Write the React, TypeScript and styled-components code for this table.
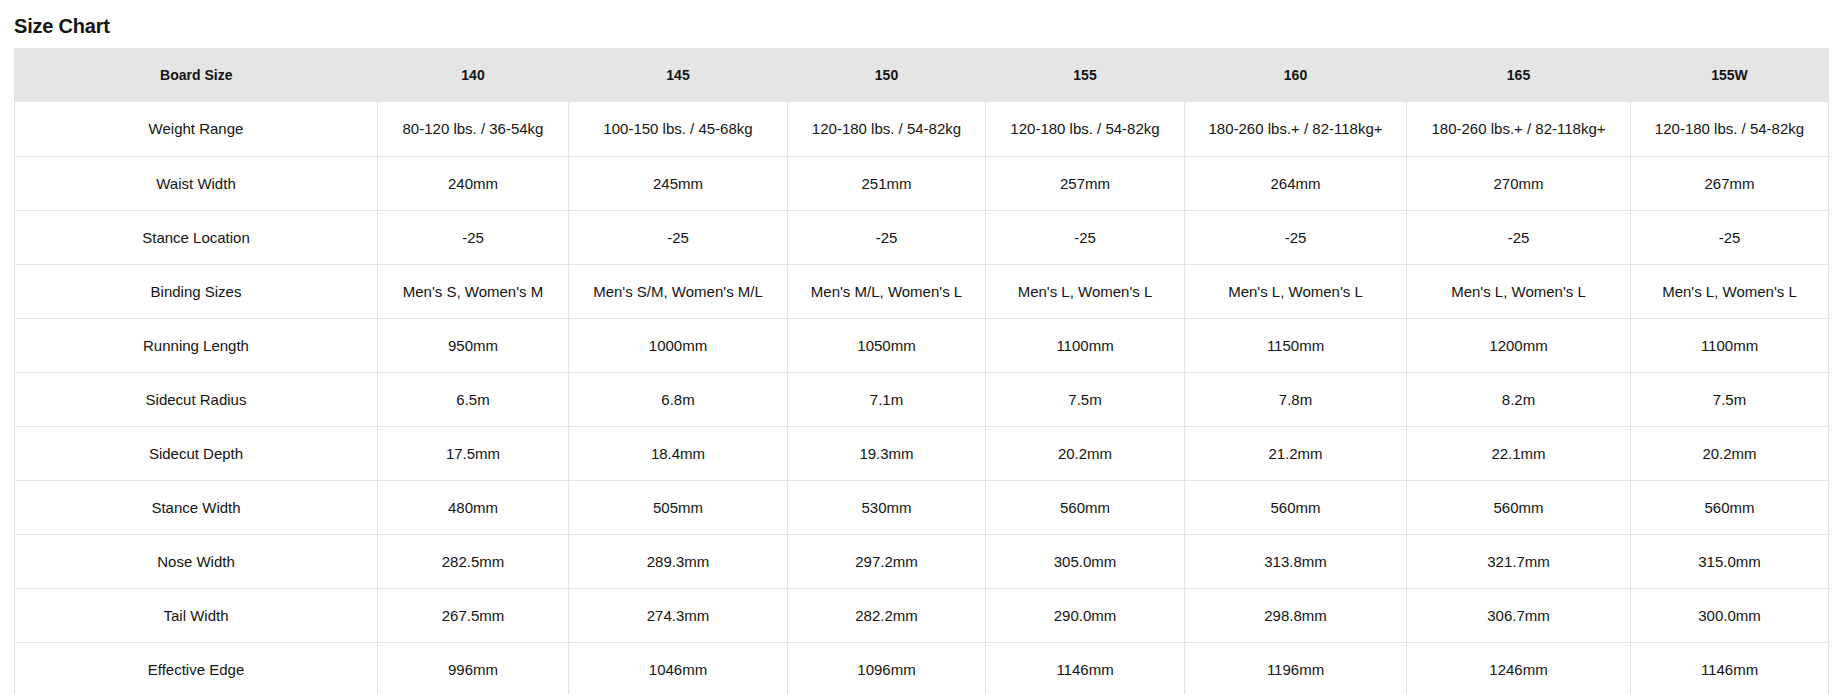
import React from "react";
import styled, { createGlobalStyle } from "styled-components";

const GlobalStyle = createGlobalStyle`
  html, body { margin: 0; padding: 0; background: #ffffff; }
  body { font-family: "Liberation Sans", Arial, Helvetica, sans-serif; color: #141414; }
`;

const Page = styled.div`
  padding: 14px 6px 0 14px;
`;

const Title = styled.h2`
  margin: 0 0 10px 0;
  font-size: 20px;
  line-height: 24px;
  font-weight: 700;
  color: #141414;
  letter-spacing: -0.2px;
`;

const Table = styled.table`
  width: 1814px;
  border-collapse: collapse;
  table-layout: fixed;
  border-left: 1px solid #e2e2e2;
`;

const HeadRow = styled.tr`
  background: #e5e5e5;
  height: 54px;
`;

const HeadCell = styled.th`
  font-size: 14px;
  font-weight: 700;
  text-align: center;
  padding: 0 8px;
  color: #141414;
`;

const Row = styled.tr`
  height: 54px;
  border-bottom: 1px solid #e4e4e4;
`;

const Cell = styled.td`
  font-size: 15px;
  font-weight: 400;
  text-align: center;
  padding: 0 6px;
  border-right: 1px solid #e4e4e4;
  color: #141414;
  white-space: nowrap;
`;

const widths = [363, 191, 219, 198, 199, 222, 224, 198];
const headers = ["Board Size", "140", "145", "150", "155", "160", "165", "155W"];

const rows: string[][] = [
  ["Weight Range", "80-120 lbs. / 36-54kg", "100-150 lbs. / 45-68kg", "120-180 lbs. / 54-82kg", "120-180 lbs. / 54-82kg", "180-260 lbs.+ / 82-118kg+", "180-260 lbs.+ / 82-118kg+", "120-180 lbs. / 54-82kg"],
  ["Waist Width", "240mm", "245mm", "251mm", "257mm", "264mm", "270mm", "267mm"],
  ["Stance Location", "-25", "-25", "-25", "-25", "-25", "-25", "-25"],
  ["Binding Sizes", "Men's S, Women's M", "Men's S/M, Women's M/L", "Men's M/L, Women's L", "Men's L, Women's L", "Men's L, Women's L", "Men's L, Women's L", "Men's L, Women's L"],
  ["Running Length", "950mm", "1000mm", "1050mm", "1100mm", "1150mm", "1200mm", "1100mm"],
  ["Sidecut Radius", "6.5m", "6.8m", "7.1m", "7.5m", "7.8m", "8.2m", "7.5m"],
  ["Sidecut Depth", "17.5mm", "18.4mm", "19.3mm", "20.2mm", "21.2mm", "22.1mm", "20.2mm"],
  ["Stance Width", "480mm", "505mm", "530mm", "560mm", "560mm", "560mm", "560mm"],
  ["Nose Width", "282.5mm", "289.3mm", "297.2mm", "305.0mm", "313.8mm", "321.7mm", "315.0mm"],
  ["Tail Width", "267.5mm", "274.3mm", "282.2mm", "290.0mm", "298.8mm", "306.7mm", "300.0mm"],
  ["Effective Edge", "996mm", "1046mm", "1096mm", "1146mm", "1196mm", "1246mm", "1146mm"],
];

export default function App() {
  return (
    <>
      <GlobalStyle />
      <Page>
        <Title>Size Chart</Title>
        <Table>
          <colgroup>
            {widths.map((w, i) => (
              <col key={i} style={{ width: w }} />
            ))}
          </colgroup>
          <thead>
            <HeadRow>
              {headers.map((h) => (
                <HeadCell key={h}>{h}</HeadCell>
              ))}
            </HeadRow>
          </thead>
          <tbody>
            {rows.map((r) => (
              <Row key={r[0]}>
                {r.map((c, i) => (
                  <Cell key={i}>{c}</Cell>
                ))}
              </Row>
            ))}
          </tbody>
        </Table>
      </Page>
    </>
  );
}
